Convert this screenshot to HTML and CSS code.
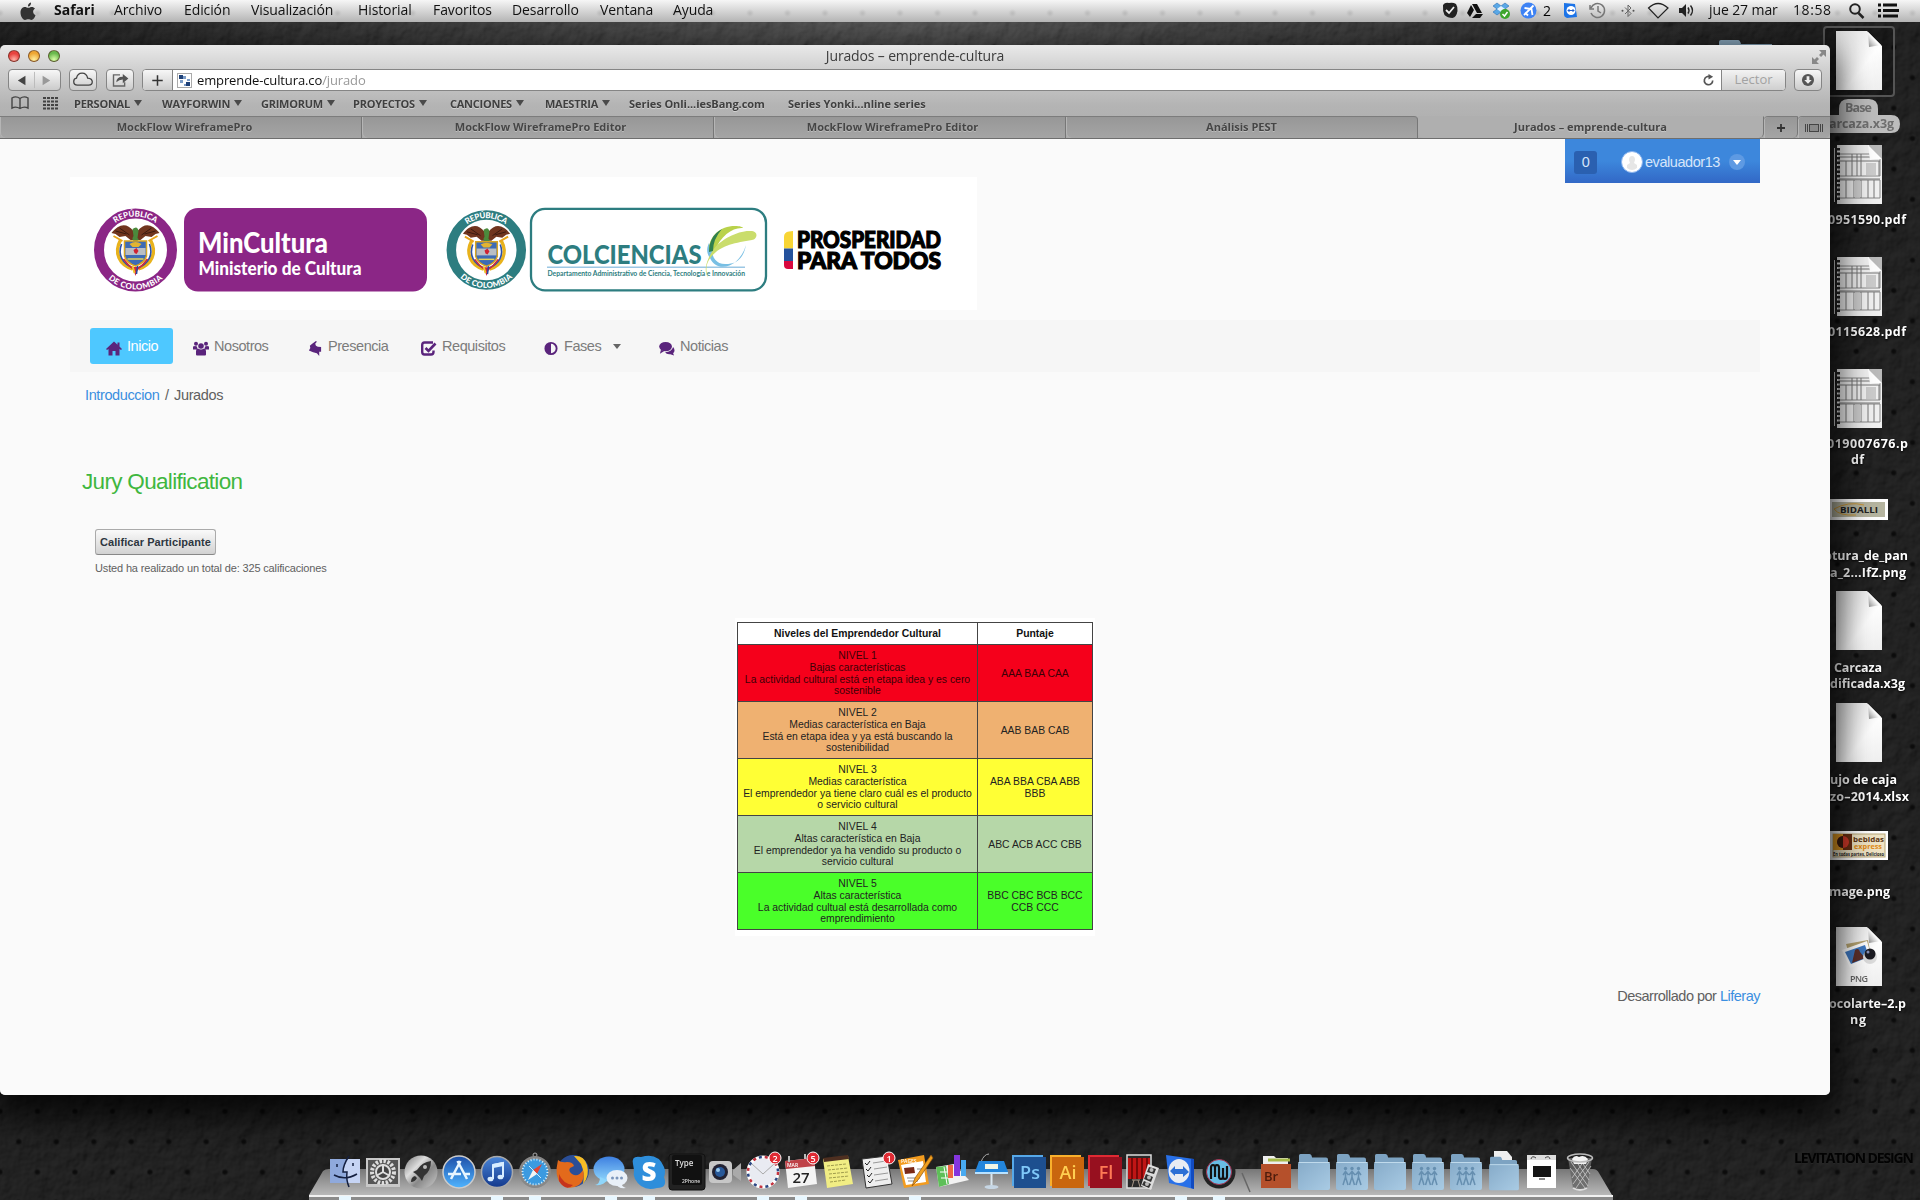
FILE: index.html
```html
<!DOCTYPE html>
<html lang="es">
<head>
<meta charset="utf-8">
<title>Jurados – emprende-cultura</title>
<link rel="stylesheet" href="styles.css">
</head>
<body>
<svg class="defs" width="0" height="0" aria-hidden="true">
  <defs>
    <linearGradient id="paper" x1="0" y1="0" x2="1" y2="1"><stop offset="0" stop-color="#dcdcdc"/><stop offset=".6" stop-color="#fff"/><stop offset="1" stop-color="#eee"/></linearGradient>
    <linearGradient id="fold" x1="0" y1="1" x2="1" y2="0"><stop offset="0" stop-color="#888"/><stop offset=".5" stop-color="#fff"/><stop offset="1" stop-color="#ccc"/></linearGradient>
    <linearGradient id="blue" x1="0" y1="0" x2="0" y2="1"><stop offset="0" stop-color="#1d4fa8"/><stop offset="1" stop-color="#4fb4ff"/></linearGradient>
    <linearGradient id="navy" x1="0" y1="0" x2="0" y2="1"><stop offset="0" stop-color="#4a86d8"/><stop offset="1" stop-color="#12388c"/></linearGradient>
    <linearGradient id="metal" x1="0" y1="0" x2="1" y2="1"><stop offset="0" stop-color="#777"/><stop offset=".35" stop-color="#ddd"/><stop offset=".6" stop-color="#888"/><stop offset="1" stop-color="#ccc"/></linearGradient>
    <linearGradient id="folderFill" x1="0" y1="0" x2="1" y2="1"><stop offset="0" stop-color="#86abc9"/><stop offset="1" stop-color="#a9cbe4"/></linearGradient>
    <linearGradient id="chat" x1="0" y1="0" x2="0" y2="1"><stop offset="0" stop-color="#3d7fe0"/><stop offset="1" stop-color="#8fd6fb"/></linearGradient>
    <filter id="leather" x="0" y="0" width="100%" height="100%">
      <feTurbulence type="fractalNoise" baseFrequency=".07 .06" numOctaves="3" seed="4"/>
      <feDiffuseLighting surfaceScale="2" lighting-color="#fff"><feDistantLight azimuth="235" elevation="32"/></feDiffuseLighting>
    </filter>
    <symbol id="doc" viewBox="0 0 46 59">
      <path d="M0 0H31L46 15V59H0Z" fill="url(#paper)"/>
      <path d="M32 1L45 14L33 16Z" fill="url(#fold)"/>
    </symbol>
    <symbol id="pdf" viewBox="0 0 48 59">
      <path d="M3 0H48V59H3Z" fill="#f1f1f1"/>
      <path d="M5 9H46V31H5ZM5 35H46V53H5Z" fill="none" stroke="#888"/>
      <path d="M5 12H46M5 16H46M5 34H46M12 16V31M18 9V31M23 9V31M27 9V31M45 16V31M12 35V53M20 35V53M27 35V53M34 35V53M40 35V53" stroke="#777"/>
      <path d="M32 18h10v12h-10zM20 36h7v16h-7z" fill="#ccc"/>
      <path d="M4 3V57" stroke="#222" stroke-width="4" stroke-dasharray="2.5 2"/>
      <path d="M.5 3V57" stroke="#ddd"/>
      <path d="M35 0H48V14L36 15Z" fill="#bbb"/><path d="M34 0L48 14L36 15Z" fill="#fff"/>
    </symbol>
    <symbol id="folder" viewBox="0 0 38 44">
      <path d="M4 17V5.500q0-1.500 1.500-1.500h9q1.500 0 2 1.500l.6 2H31q2 0 2 2V17Z" fill="#7da3c2"/>
      <path d="M3 14q0-2 2-2h28q2 0 2 2v24q0 2-2 2H5q-2 0-2-2Z" fill="url(#folderFill)"/>
      <path d="M3.500 12.500h31" stroke="#c0daec"/>
    </symbol>
    <symbol id="people" viewBox="0 0 20 20">
      <g fill="none" stroke="#668fb0" stroke-width="1.500"><path d="M3.500 5V11L1 19M3.500 11L6 19M1 9L3.500 5.500L6.500 9M10 5V11L7.500 19M10 11L12.500 19M7 9L10 5.500L13 9M16.500 5V11L14 19M16.500 11L19 19M13.500 9L16.500 5.500L19 9"/></g>
      <g fill="#668fb0"><circle cx="3.500" cy="2.500" r="1.700"/><circle cx="10" cy="2.500" r="1.700"/><circle cx="16.500" cy="2.500" r="1.700"/></g>
    </symbol>
    <symbol id="crest" viewBox="-28 -28 56 56">
      <g fill="none" stroke-width="3.400"><path d="M-15-9C-22 4-16 16-3 20" stroke="#e8b21c"/><path d="M15-9C22 4 16 16 3 20" stroke="#e8b21c"/></g>
      <g fill="none" stroke-width="1.600"><path d="M-14-5C-18 6-13 15-2 19M14-5C18 6 13 15 2 19" stroke="#2d51a8"/><path d="M-12 10Q-8 16-1 21M12 10Q8 16 1 21" stroke="#d2273a"/></g>
      <path d="M-2-18C-9-27-17-25-24-16L-20-15L-16-12L-10-13L-5-9H5L10-13L16-12L20-15L24-16C17-25 9-27 2-18Z" fill="#70351f"/>
      <path d="M-20-18L-9-15M-16-21L-6-14M20-18L9-15M16-21L6-14" stroke="#3b1a10"/>
      <path d="M-3-20Q2-24 3-18L2-11Q5-9 0-7Q-5-9-2-13Z" fill="#4b8a3c"/>
      <path d="M-22-13L-13-8M22-13L13-8" stroke="#e8a51c" stroke-width="2"/>
      <path d="M-11-8H11V7Q9 14 0 17Q-9 14-11 7Z" fill="#3e6bb5" stroke="#d9a520" stroke-width="1.500"/>
      <path d="M-10-1H10V6H-10Z" fill="#b9bec4"/><path d="M-6-5Q0-9 6-5L3-2H-3Z" fill="#e2b431"/>
      <path d="M-2 1L1-1L3 2L1 5L-1 4Z" fill="#cf2233"/><path d="M-8 10H8" stroke="#e3d25c" stroke-width="1.500"/>
      <path d="M-3 18L0 27L3 18Z" fill="#d2273a"/><path d="M-3 17L-1 24" stroke="#f0c52c" stroke-width="2"/><path d="M2 17L1 25" stroke="#2749a0" stroke-width="1.500"/>
    </symbol>
  </defs>
</svg>

<header class="menubar">
  <svg class="apple" viewBox="0 0 16 19"><path d="M11 .5C9 1 7.800 2.500 8 4.500C10 4.500 11.200 2.500 11 .5ZM8.300 5.800C7 5.800 6.300 5 4.800 5C2.500 5 .5 7.200.5 10.500C.5 14 2.800 18 5 18C6.300 18 6.900 17.300 8.300 17.300C9.700 17.300 10.200 18 11.400 18C13.200 18 14.800 15.400 15.500 13.200C12.500 11.800 12.500 8 15 6.600C14.200 5.500 13 5 11.800 5C10.300 5 9.600 5.800 8.300 5.800Z" fill="#333"/></svg>
  <nav class="menus"><b>Safari</b><span>Archivo</span><span>Edición</span><span>Visualización</span><span>Historial</span><span>Favoritos</span><span>Desarrollo</span><span>Ventana</span><span>Ayuda</span></nav>
  <svg class="status" viewBox="1440 0 262 22">
    <path d="M1443 5q2-3 6-2q4-1 7 1q2 3 1.500 7q-1 6-5 7q-5 0-8-3q-2-4-1.500-10Z" fill="#222"/><path d="M1446 10l3 3l5-6" fill="none" stroke="#eee" stroke-width="1.800"/>
    <path d="M1472 4h5l5 9h-5zM1471 5l3 5l-4 7l-3-4zM1476 14h7l-3 4h-8z" fill="#111"/>
    <path d="M1493 6l4-3l4 3l4-3l4 3l-4 3l4 3l-4 3l-4-3l-4 3l-4-3l4-3Z" fill="#5aa8e6" stroke="#2b6fb5" stroke-width=".6"/><path d="M1497 9l4-3l4 3l-4 3z" fill="#e6f3fc"/><circle cx="1505" cy="14" r="5" fill="#3da52b"/><path d="M1502.500 14l2 2l3-4" fill="none" stroke="#fff" stroke-width="1.500"/>
    <circle cx="1528.500" cy="10.500" r="8" fill="#3d82f4"/><path d="M1533.500 5.500L1524 15M1524.500 8l7 1 1 6M1525 12.500l3 3" fill="none" stroke="#fff" stroke-width="1.800"/>
    <path d="M1564 3l11 1l2 13l-10 1q-3-1-3-3z" fill="#1c74e8"/><circle cx="1571" cy="10.500" r="4.500" fill="#fff"/><path d="M1568 10.500h6M1569.500 9l-1.500 1.500l1.500 1.500M1572.500 9l1.500 1.500l-1.500 1.500" fill="none" stroke="#1c5fd0"/>
    <g fill="none" stroke="#777" stroke-width="1.500"><path d="M1591 8a7 7 0 1 1 0 5M1590 5v4h4M1598 6v5l3 2"/></g>
    <path d="M1625 7.500l6 6-3 3V5l3 3-6 6" fill="none" stroke="#666" stroke-width="1"/><g fill="#555"><circle cx="1622.500" cy="10.700" r="1"/><circle cx="1633.500" cy="10.700" r="1"/></g>
    <path d="M1648.500 8Q1658-1 1668 8L1658 18Z" fill="none" stroke="#222" stroke-width="1.200"/>
    <path d="M1679 8h3l4-4v13l-4-4h-3z" fill="#222"/><path d="M1688 7.500q2 3 0 6M1690.500 5.500q4 5 0 10" fill="none" stroke="#222" stroke-width="1.400"/>
    <text x="1543" y="16" class="statusnum">2</text>
  </svg>
  <span class="date">jue 27 mar</span><span class="clock">18:58</span>
  <svg class="tools" viewBox="0 0 60 22"><circle cx="11" cy="9" r="4.800" fill="none" stroke="#222" stroke-width="2"/><path d="M14.500 13l5 5" stroke="#222" stroke-width="2.500"/><path d="M34 5h3M34 10.500h3M34 16h3M39 5h14M39 10.500h16M39 16h15" stroke="#111" stroke-width="2.800"/></svg>
</header>

<main class="desktop">
  <svg class="leather" width="1920" height="1178"><rect width="1920" height="1178" filter="url(#leather)"/></svg>
  <div class="holes"></div>

  <svg class="files" width="320" height="1060" viewBox="1600 22 320 1060">
    <path d="M1719 60V42q0-2 2-2h17q2 0 3 4h31V60z" fill="#8faec4"/>
    <rect x="1824" y="27" width="70" height="69" rx="3" fill="rgba(0,0,0,.25)" stroke="#555" stroke-width="2"/>
    <use href="#doc" x="1836" y="31" width="46" height="59"/>
    <path d="M1839 115v-6q0-10 9-10h21q9 0 9 10v6h13q9 0 9 9t-9 9H1790v-18z" fill="#bdbdbd"/>
    <g class="chosen"><text x="1845" y="112" textLength="27">Base</text><text x="1829" y="128" textLength="65">arcaza.x3g</text></g>
    <use href="#pdf" x="1834" y="145" width="48" height="59"/>
    <use href="#pdf" x="1834" y="257" width="48" height="59"/>
    <use href="#pdf" x="1834" y="369" width="48" height="59"/>
    <g class="labels">
      <text x="1828" y="224" textLength="78">0951590.pdf</text>
      <text x="1828" y="336" textLength="78">0115628.pdf</text>
      <text x="1827" y="448" textLength="81">019007676.p</text><text x="1851" y="464" textLength="13">df</text>
      <text x="1824" y="560" textLength="84">ptura_de_pan</text><text x="1830" y="577" textLength="76">a_2...IfZ.png</text>
      <text x="1834" y="672" textLength="48">Carcaza</text><text x="1830" y="688" textLength="75">dificada.x3g</text>
      <text x="1830" y="784" textLength="67">ujo de caja</text><text x="1830" y="801" textLength="79">zo–2014.xlsx</text>
      <text x="1829" y="896" textLength="61">mage.png</text>
      <text x="1829" y="1008" textLength="77">ocolarte–2.p</text><text x="1850" y="1024" textLength="16">ng</text>
    </g>
    <rect x="1820" y="499" width="68" height="21" fill="#fff"/><rect x="1832" y="502" width="53" height="15" fill="#b6b5a0"/>
    <path d="M1834 509q14-8 30-4M1834 509q5 7 22 6" fill="none" stroke="#c9973a"/><text x="1840" y="513" textLength="38" lengthAdjust="spacingAndGlyphs" class="bidalli">BIDALLI</text>
    <use href="#doc" x="1836" y="591" width="46" height="59"/>
    <use href="#doc" x="1836" y="703" width="46" height="59"/>
    <rect x="1820" y="831" width="68" height="29" fill="#fff"/><rect x="1833" y="834" width="52" height="23" fill="#efe4c5" stroke="#b9a779"/>
    <rect x="1833" y="834" width="19" height="16" fill="#6b2f13"/><rect x="1833" y="834" width="10" height="16" fill="#e39a23"/><circle cx="1843" cy="842" r="6" fill="#d43a2a"/><path d="M1843 836a6 6 0 0 0 0 12z" fill="#3a1d10"/>
    <text x="1853" y="841.500" textLength="31" lengthAdjust="spacingAndGlyphs" class="bebidas">bebidas</text><text x="1854" y="848.500" textLength="28" lengthAdjust="spacingAndGlyphs" class="express">express</text><text x="1833" y="856" textLength="51" lengthAdjust="spacingAndGlyphs" class="slogan">En todas partes, Delicioso</text>
    <use href="#doc" x="1836" y="927" width="46" height="59"/>
    <path d="M1846 944l22-4 3 16-20 5z" fill="#b6a472"/><path d="M1842 950l25-9 5 18-22 9z" fill="#fff"/><path d="M1845 952l20-7 4 12-18 7z" fill="#3e78c0"/><path d="M1852 963l3-13q4-3 5 2l5 6z" fill="#5c2f2a"/>
    <circle cx="1870" cy="957" r="7" fill="#ddd"/><circle cx="1870" cy="954" r="5.500" fill="#1b1b22"/><circle cx="1868" cy="952" r="1.500" fill="#8892b8"/>
    <text x="1850" y="982" textLength="18" class="ext">PNG</text>
  </svg>
  <div class="credit">LEVITATION DESIGN</div>

  <section class="window">
    <div class="titlebar">
      <div class="lights"><i class="red"></i><i class="amber"></i><i class="green"></i></div>
      <h1>Jurados – emprende-cultura</h1>
      <svg class="expand" viewBox="0 0 14 14"><path d="M7 0h7v7l-2.500-2.500l-2.500 2.500l-2-2l2.500-2.500zM0 7l2.500 2.500l2.500-2.500l2 2l-2.500 2.500l2.500 2.500H0z" fill="#888"/></svg>
    </div>
    <div class="toolbar">
      <div class="btn pair"><svg viewBox="0 0 53 21"><path d="M17 6v10L9 11z" fill="#444"/><path d="M35 6v10l8-5z" fill="#999"/><path d="M26.500 2v17" stroke="#bbb"/></svg></div>
      <div class="btn"><svg viewBox="0 0 28 21"><path d="M8 16q-4 0-4-4q0-3 3-3.500Q8 3 13 3t6 5.500q5 .5 5 4T20 16z" fill="none" stroke="#444" stroke-width="1.400"/></svg></div>
      <div class="btn share"><svg viewBox="0 0 28 21"><path d="M14 5H7v12h12v-4" fill="none" stroke="#666" stroke-width="1.500"/><path d="M10 13q0-6 7-6V4l6 5-6 5v-4q-4 0-7 3z" fill="#555"/></svg></div>
      <div class="address">
        <div class="add"><svg viewBox="0 0 28 21"><path d="M14 5.500v11M8.500 11h11" stroke="#333" stroke-width="1.600"/></svg></div>
        <svg class="favicon" viewBox="0 0 15 15"><rect x=".5" y=".5" width="14" height="14" fill="#fff" stroke="#aaa"/><path d="M2 2h4v4H2zM9 9h4v4H9z" fill="#1f4178"/><path d="M6 3h3v3H6zM3 7h3v3H3zM7 11h2v2H7zM10 6h3v2h-3z" fill="#7b9cc7"/></svg>
        <span class="url">emprende-cultura.co<i>/jurado</i></span>
        <svg class="reload" viewBox="0 0 14 14"><path d="M11.500 7a4.500 4.500 0 1 1-3-4.200" fill="none" stroke="#555" stroke-width="1.800"/><path d="M7 0l5 3-5 3z" fill="#555"/></svg>
        <span class="reader">Lector</span>
      </div>
      <div class="btn"><svg viewBox="0 0 28 21"><circle cx="14" cy="10.500" r="6.500" fill="#555"/><path d="M12.500 6.500h3v4h2.500l-4 4-4-4h2.500z" fill="#eee"/></svg></div>
    </div>
    <nav class="bookmarks">
      <svg viewBox="0 0 18 14"><path d="M9 2.500Q5-.5 1 2V12Q5 10 9 12.500Q13 10 17 12V2Q13-.5 9 2.500V12" fill="none" stroke="#444" stroke-width="1.400"/></svg>
      <svg viewBox="0 0 18 14"><path d="M1 2H16M1 5.500H16M1 9H16M1 12.500H16" stroke="#444" stroke-width="2.200" stroke-dasharray="3 1"/></svg>
      <span class="drop">PERSONAL</span><span class="drop">WAYFORWIN</span><span class="drop">GRIMORUM</span><span class="drop">PROYECTOS</span><span class="drop">CANCIONES</span><span class="drop">MAESTRIA</span><span>Series Onli...iesBang.com</span><span>Series Yonki...nline series</span>
    </nav>
    <div class="tabs">
      <div>MockFlow WireframePro</div><div>MockFlow WireframePro Editor</div><div>MockFlow WireframePro Editor</div><div class="last">Análisis PEST</div><div class="active">Jurados – emprende-cultura</div>
      <div class="mini"><svg viewBox="0 0 10 10"><path d="M5 1v8M1 5h8" stroke="#333" stroke-width="1.800"/></svg></div>
      <div class="mini end"><svg viewBox="0 0 18 10"><path d="M.5 1v8M2.500 1v8M15.500 1v8M17.500 1v8" stroke="#444"/><rect x="4.500" y="1.500" width="9" height="7" fill="#8a8a8a" stroke="#444"/></svg></div>
    </div>

    <div class="page">
      <div class="userbar">
        <span class="count">0</span>
        <svg class="avatar" viewBox="0 0 22 22"><circle cx="11" cy="11" r="10.500" fill="#fff" stroke="#8ab4ee"/><path d="M11 5q3 0 3 4l-1 3 3 2v3q-5 4-10 0v-3l3-2-1-3q0-4 3-4z" fill="#e6e6e6"/></svg>
        <span class="who">evaluador13</span>
        <svg class="more" viewBox="0 0 16 16"><circle cx="8" cy="8" r="8" fill="#5e9ae3"/><path d="M4 6h8l-4 5z" fill="#fff"/></svg>
      </div>
      <svg class="banner" viewBox="70 177 907 133">
        <defs>
          <path id="arcTop" d="M102 250A33.500 33.500 0 0 1 169 250"/><path id="arcBottom" d="M96 250A39.500 39.500 0 0 0 175 250"/>
          <path id="arcTop2" d="M454.300 250A32 32 0 0 1 518.300 250"/><path id="arcBottom2" d="M448.300 250A38 38 0 0 0 524.300 250"/>
        </defs>
        <rect x="70" y="177" width="907" height="133" fill="#fff"/>
        <circle cx="135.500" cy="250" r="36.500" fill="#fff" stroke="#8b2686" stroke-width="10"/>
        <g class="arc"><text textLength="43"><textPath href="#arcTop" startOffset="50%" text-anchor="middle">REPÚBLICA</textPath></text><text textLength="60"><textPath href="#arcBottom" startOffset="50%" text-anchor="middle">DE COLOMBIA</textPath></text></g>
        <use href="#crest" x="107.500" y="221" width="56" height="56"/>
        <rect x="184" y="208" width="243" height="83.500" rx="14" fill="#8b2686"/>
        <text x="198" y="252.700" textLength="130" lengthAdjust="spacingAndGlyphs" class="brand big">MinCultura</text>
        <text x="198.500" y="274.500" textLength="163" lengthAdjust="spacingAndGlyphs" class="brand small">Ministerio de Cultura</text>
        <circle cx="486.300" cy="250" r="35" fill="#fff" stroke="#2d7d80" stroke-width="9.500"/>
        <g class="arc"><text textLength="41"><textPath href="#arcTop2" startOffset="50%" text-anchor="middle">REPÚBLICA</textPath></text><text textLength="58"><textPath href="#arcBottom2" startOffset="50%" text-anchor="middle">DE COLOMBIA</textPath></text></g>
        <use href="#crest" x="459" y="222" width="55" height="55"/>
        <rect x="531" y="208.800" width="235" height="81.500" rx="14" fill="#fff" stroke="#2d7d80" stroke-width="2.300"/>
        <text x="547.500" y="264" textLength="154" lengthAdjust="spacingAndGlyphs" class="colc">COLCIENCIAS</text>
        <path d="M547 267.300H745" stroke="#9cc7e4" stroke-width="1.500"/>
        <text x="547.500" y="276" textLength="197.500" lengthAdjust="spacingAndGlyphs" class="dept">Departamento Administrativo de Ciencia, Tecnología e Innovación</text>
        <path d="M710 258C716 273 739 269 746 245C743 261 734 264 727 264C717 265 712 258 712 250L709 243C706 249 707 254 710 258Z" fill="#78bfe4"/>
        <path d="M709 250C709 236 720 226 735 226C740 226 743 227 743 228C733 227 721 235 714 252Z" fill="#b9d24b"/>
        <path d="M713 250C720 240 737 231 749 231C759 230 758 239 752 240C736 243 722 244 711 257C705 265 706 270 708 278C703 269 707 260 713 250Z" fill="#cadd6c"/>
        <path d="M709 252Q709 236 722 229Q713 239 713 251Z" fill="#2f7f4f"/>
        <path d="M793 231v17.500h-9V237q0-5 5-5.500z" fill="#f8d535"/><path d="M784 248.500h9v12.500h-9z" fill="#25529c"/><path d="M784 261h9v8h-5q-4 0-4-4z" fill="#d9083e"/>
        <g class="prosper"><text x="797" y="248" textLength="144" lengthAdjust="spacingAndGlyphs">PROSPERIDAD</text><text x="797" y="268.500" textLength="144" lengthAdjust="spacingAndGlyphs">PARA TODOS</text></g>
      </svg>
      <nav class="sitenav">
        <a class="on"><svg viewBox="0 0 16 14"><path d="M8 0L0 7.500l1 1L2.500 7.500V14H6.500V9.500H9.500V14H13.500V7.500L15 8.500l1-1L13.500 5V1H11.500V3.200Z"/></svg>Inicio</a>
        <a><svg viewBox="0 0 16 14"><circle cx="3" cy="2.200" r="2"/><circle cx="13" cy="2.200" r="2"/><circle cx="8" cy="4.500" r="2.800"/><path d="M0 5q2-1 4 0l.5 3H0zM12 5q2-1 4 0v3h-4.500zM3 13V9.500Q3 7.500 5 7q3 2 6 0q2 .5 2 2.500V13q0 1-1 1H4q-1 0-1-1z"/></svg>Nosotros</a>
        <a><svg viewBox="0 0 14 16"><path d="M8 0L9 .7L7.200 3L8 5L10 6L13.500 6.500L13.500 11.500L11.500 11.500V16L9 13L5 12L.5 10L2 7.500L1.500 5L4 3Z"/></svg>Presencia</a>
        <a><svg viewBox="0 0 16 14"><path d="M12 1H3.500Q1.200 1 1.200 3.500V10.500Q1.200 13 3.500 13H10Q12.500 13 12.500 10.500V9" fill="none" stroke="#5a247c" stroke-width="2.400"/><path d="M4.500 6.500L7.500 9.500L14.500 2" fill="none" stroke="#5a247c" stroke-width="2.600"/></svg>Requisitos</a>
        <a><svg viewBox="0 0 16 16"><path fill-rule="evenodd" d="M8 1a7 7 0 1 1 0 14A7 7 0 0 1 8 1ZM8 3a5 5 0 0 1 0 10Z"/></svg>Fases<i></i></a>
        <a><svg viewBox="0 0 17 15"><ellipse cx="7" cy="5.500" rx="6.800" ry="5"/><path d="M2 9l-1 4 5-3zM15 6q3 4 0 6.500l1 2.500-4-1.500q-4 .5-5.500-2q7-.5 8.500-5.500z"/></svg>Noticias</a>
      </nav>
      <div class="crumbs"><a>Introduccion</a><span>/</span><span>Jurados</span></div>
      <section class="jury">
        <h2>Jury Qualification</h2>
        <button>Calificar Participante</button>
        <p>Usted ha realizado un total de: 325 calificaciones</p>
      </section>
      <div class="levels">
        <table>
          <tr class="head"><th>Niveles del Emprendedor Cultural</th><th>Puntaje</th></tr>
          <tr class="n1"><td>NIVEL 1<br>Bajas características<br>La actividad cultural está en etapa idea y es cero<br>sostenible</td><td>AAA BAA CAA</td></tr>
          <tr class="n2"><td>NIVEL 2<br>Medias característica en Baja<br>Está en etapa idea y ya está buscando la<br>sostenibilidad</td><td>AAB BAB CAB</td></tr>
          <tr class="n3"><td>NIVEL 3<br>Medias característica<br>El emprendedor ya tiene claro cuál es el producto<br>o servicio cultural</td><td>ABA BBA CBA ABB<br>BBB</td></tr>
          <tr class="n4"><td>NIVEL 4<br>Altas característica en Baja<br>El emprendedor ya ha vendido su producto o<br>servicio cultural</td><td>ABC ACB ACC CBB</td></tr>
          <tr class="n5"><td>NIVEL 5<br>Altas característica<br>La actividad cultual está desarrollada como<br>emprendimiento</td><td>BBC CBC BCB BCC<br>CCB CCC</td></tr>
        </table>
      </div>
      <footer>Desarrollado por <a>Liferay</a></footer>
    </div>
  </section>

  <svg class="shelf" viewBox="0 0 1304 32" width="1304" height="32">
    <defs><linearGradient id="shelfFill" x1="0" y1="0" x2="0" y2="1"><stop offset="0" stop-color="#777"/><stop offset="1" stop-color="#b9b9b9"/></linearGradient></defs>
    <path d="M14 3Q16 1 20 1H1284Q1288 1 1290 5L1303 27H0Z" fill="url(#shelfFill)"/>
    <rect y="27" width="1304" height="2" fill="#f2f2f2"/><rect y="29" width="1304" height="3" fill="#8b8b8b"/>
    <path d="M933 5L941 24" stroke="#666" stroke-width="1.500"/>
    <g fill="#e8f7ff"><path d="M30 28h12v4H30zM182 28h12v4h-12zM220 28h12v4h-12zM296 28h12v4h-12zM334 28h12v4h-12zM448 28h12v4h-12zM486 28h12v4h-12zM600 28h12v4h-12zM866 28h12v4h-12zM904 28h12v4h-12z"/></g>
  </svg>
  <div class="dock">
    <svg viewBox="0 0 38 44"><path d="M4 9H34V33H4Z" fill="#8fa9dc"/><path d="M22 9Q17 16 17 22H21Q20 28 22 33H34V9Z" fill="#c6d4f4"/><path d="M23 6Q17 15 17 22H21Q20 30 23 37M11 14V17M27 13V16M8 25Q19 31 31 24" fill="none" stroke="#152040" stroke-width="1.500"/></svg>
    <svg viewBox="0 0 38 44"><rect x="2" y="8" width="34" height="29" fill="#c8c8c8"/><rect x="4" y="10" width="30" height="24" fill="#555"/><circle cx="19" cy="22" r="11" fill="none" stroke="#ddd" stroke-width="4" stroke-dasharray="2.500 1.500"/><circle cx="19" cy="22" r="7" fill="#444" stroke="#ddd" stroke-width="2"/><path d="M19 22V14M19 22L26 26M19 22L12 26" stroke="#ddd" stroke-width="2"/></svg>
    <svg viewBox="0 0 38 44"><circle cx="19" cy="22" r="16.500" fill="url(#metal)"/><path d="M29 11Q20 12 15 20L11 22L14 24L18 28L20 31L22 26Q29 21 29 11ZM13 26Q9 27 9 32Q13 32 15 28Z" fill="#333"/><circle cx="23" cy="17" r="2" fill="#bbb"/></svg>
    <svg viewBox="0 0 38 44"><circle cx="19" cy="22" r="16" fill="url(#blue)" stroke="#ccc" stroke-width="1.500"/><path d="M20.500 11L11 29M17.500 11L27 29M8 24H21M25 24H30" stroke="#e8f6ff" stroke-width="2.500"/></svg>
    <svg viewBox="0 0 38 44"><circle cx="19" cy="22" r="15.500" fill="url(#navy)" stroke="#aaa" stroke-width="1.500"/><path d="M15 29V15L25 13V27" fill="none" stroke="#d8edff" stroke-width="2"/><path d="M15 16L25 14" stroke="#d8edff" stroke-width="4"/><ellipse cx="12.500" cy="29" rx="3" ry="2.300" fill="#d8edff"/><ellipse cx="22.500" cy="27" rx="3" ry="2.300" fill="#d8edff"/></svg>
    <svg viewBox="0 0 38 44"><circle cx="19" cy="5" r="2" fill="none" stroke="#aaa"/><circle cx="19" cy="22" r="14.500" fill="#3b9ae0" stroke="#888" stroke-width="3"/><circle cx="19" cy="22" r="12.500" fill="none" stroke="#d9f2ff" stroke-width="2" stroke-dasharray="1 2"/><path d="M26 14L17 20L21 24Z" fill="#e24434"/><path d="M12 30L17 20L21 24Z" fill="#f3f3f3"/><path d="M13 16L25 28" stroke="#cceeff"/></svg>
    <svg viewBox="0 0 38 44"><circle cx="19" cy="21" r="16" fill="#2a4e97"/><path d="M20 6Q30 5 33 15Q36 26 29 34Q31 23 27 14Z" fill="#f6bd25"/><path d="M4 10Q7 13 13 12Q19 12 20 16L16 18Q14 21 18 24Q24 28 29 20Q32 29 25 35Q15 41 7 34Q0 26 4 10Z" fill="#e36a1b"/><path d="M5 24Q9 34 19 35Q12 42 5 31Z" fill="#c6331c"/></svg>
    <svg viewBox="0 0 38 44"><ellipse cx="17" cy="19" rx="15.500" ry="12.500" fill="url(#chat)"/><path d="M8 27Q8 34 3 35Q12 36 15 30Z" fill="#8fd6fb"/><ellipse cx="25" cy="28" rx="10.500" ry="8" fill="#e9f0f8"/><path d="M29 33Q30 37 34 38Q26 39 24 34Z" fill="#e9f0f8"/><g fill="#7b96bc"><circle cx="20.500" cy="28" r="1.500"/><circle cx="25" cy="28" r="1.500"/><circle cx="29.500" cy="28" r="1.500"/></g></svg>
    <svg viewBox="0 0 38 44"><path d="M3 14Q1 5 11 7Q28 2 34 17Q36 22 34 27Q38 38 27 38Q12 42 5 29Q3 25 4 20Z" fill="#2e8edb"/><text x="19" y="31" class="skype">S</text></svg>
    <svg viewBox="0 0 38 44"><rect x="1" y="4" width="36" height="36" rx="3" fill="#222" stroke="#111"/><rect x="4" y="5" width="30" height="30" rx="2" fill="#111"/><text x="7" y="16" class="type">Type</text><text x="14" y="33" class="phone">2Phone</text></svg>
    <svg viewBox="0 0 38 44"><path d="M27 20L35 13V31L27 25Z" fill="#aaa"/><rect x="3" y="11" width="23" height="22" rx="4" fill="#c7c7c7"/><circle cx="14" cy="22" r="8" fill="#223"/><circle cx="14" cy="22" r="5" fill="#275899"/><circle cx="12" cy="20" r="2" fill="#98c9ee"/></svg>
    <svg viewBox="0 0 38 44"><circle cx="19" cy="22" r="15" fill="#e9ebf2" stroke="#fff" stroke-width="3"/><circle cx="19" cy="22" r="15" fill="none" stroke="#c43340" stroke-width="2.500" stroke-dasharray="3 9"/><circle cx="19" cy="22" r="15" fill="none" stroke="#2b4784" stroke-width="2.500" stroke-dasharray="3 9" stroke-dashoffset="6"/><path d="M8 14L19 24L30 14" fill="none" stroke="#aaa"/><circle cx="31" cy="8" r="6" fill="#e02b34" stroke="#fff"/><text x="31" y="11.500" class="num">2</text></svg>
    <svg viewBox="0 0 38 44"><path d="M3 11L32 8L35 34L6 38Z" fill="#f4f4f4"/><path d="M3 11L32 8L33 16L4 19Z" fill="#bf4248"/><text x="5" y="17" class="mar">MAR</text><text x="19" y="33" class="day">27</text><path d="M7 12V6M23 9V4" stroke="#bbb" stroke-width="2"/><circle cx="31" cy="8" r="6" fill="#e02b34" stroke="#fff"/><text x="31" y="11.500" class="num">5</text></svg>
    <svg viewBox="0 0 38 44"><path d="M3 9L28 6L33 34L7 38Z" fill="#f1ed84"/><path d="M3 8L28 5L29 9L4 12Z" fill="#4e2f20"/><path d="M7 16L26 14M8 20L28 18M9 24L28 22M9 28L29 26M10 32L26 30" stroke="#a09c4d" stroke-dasharray="3 1"/></svg>
    <svg viewBox="0 0 38 44"><path d="M4 9L29 6L34 34L8 38Z" fill="#eee" stroke="#333"/><path d="M7 13l2 2 3-4M8 19l2 2 3-4M9 25l2 2 3-4M10 31l2 2 3-4" fill="none" stroke="#222"/><path d="M15 13L28 11M16 19L29 17M16 25L30 23M17 31L30 29" stroke="#999"/><circle cx="31" cy="8" r="6" fill="#e02b34" stroke="#fff"/><text x="31" y="11.500" class="num">1</text></svg>
    <svg viewBox="0 0 38 44"><path d="M2 10L28 5L33 34L8 38Z" fill="#f39c1f"/><path d="M5 15L27 11L30 32L10 35Z" fill="#fff"/><text x="5" y="13" class="pages">PAGES</text><path d="M8 18L18 17L19 23L9 24Z" fill="#7b2b18"/><path d="M11 28h13M12 31h10M21 19h5" stroke="#888"/><path d="M35 5L19 28L16 36L22 30L37 8Z" fill="#f0a020" stroke="#8c5310" stroke-width=".7"/></svg>
    <svg viewBox="0 0 38 44"><path d="M2 17L20 14L35 30L5 37Z" fill="#f2f2f2"/><path d="M2 17L12 16L15 34L5 37Z" fill="#5ebf58"/><path d="M6 22h7M7 28h7M10 17l3 17" stroke="#fff"/><path d="M14 15h5v13h-5z" fill="#ee6644"/><path d="M20 5h6v21h-6z" fill="#8435de"/><path d="M27 10h5v16h-5z" fill="#48aaf0"/></svg>
    <svg viewBox="0 0 38 44"><path d="M9 12Q12 4 17 4" fill="none" stroke="#aaa"/><path d="M7 11H32L36 22H3Z" fill="#2386dc"/><path d="M3 22h33v2H3z" fill="#b9e2ff"/><path d="M13 14h13v5H13z" fill="#f1f6e6"/><path d="M18.500 24h2v12h-2z" fill="#d9e6ef"/><ellipse cx="19.500" cy="37" rx="7" ry="2" fill="#c6d6e4"/></svg>
    <svg viewBox="0 0 38 44"><path d="M2 5H33V36H2Z" fill="#56a8e8"/><path d="M4 7H36V38H4Z" fill="#1d4f8f"/><text x="20" y="29" class="adobe ps">Ps</text></svg>
    <svg viewBox="0 0 38 44"><path d="M2 5H33V36H2Z" fill="#f9b02c"/><path d="M4 7H36V38H4Z" fill="#c9660e"/><text x="20" y="29" class="adobe ai">Ai</text></svg>
    <svg viewBox="0 0 38 44"><path d="M2 5H33V36H2Z" fill="#e02a33"/><path d="M4 7H36V38H4Z" fill="#97101f"/><text x="20" y="29" class="adobe fl">Fl</text></svg>
    <svg viewBox="0 0 38 44"><path d="M3 5H27V38H3Z" fill="#2a2a2a" stroke="#ddd" stroke-width="1.500"/><path d="M4 8H26V29H4Z" fill="#c01515"/><path d="M8 8v21M13 8v21M18 8v21M23 8v21" stroke="#7a0808" stroke-width="2"/><path d="M8 30h8M10 30l-2 7M14 30l2 7" stroke="#a98"/><path d="M24 14L35 18L27 40L17 36Z" fill="#ddd"/><path d="M25 17L32 19L30 24L23 22ZM22 24L29 27L27 32L20 29ZM20 31L27 34L25 38L18 35Z" fill="#333"/><circle cx="27.500" cy="20" r="2" fill="#bbb"/><circle cx="25" cy="27.500" r="2" fill="#bbb"/><circle cx="23" cy="34" r="2" fill="#bbb"/></svg>
    <svg viewBox="0 0 38 44"><path d="M4 5L32 9V39L7 33Z" fill="#2870e8"/><path d="M29 9L32 9V39L29 38Z" fill="#124bc0"/><ellipse cx="17" cy="21" rx="10.500" ry="12" fill="#e9edf3"/><path d="M8 21L13 16V19H21V16L27 22L21 27V24H13V26Z" fill="#2c70d5"/></svg>
    <svg viewBox="0 0 38 44"><circle cx="19" cy="22" r="16.500" fill="#222"/><circle cx="19" cy="22" r="12.500" fill="#68bce4" stroke="#a8304e"/><path d="M11 29V18Q11 15 13 15T15 18V27V18Q15 15 17 15T19 18V27M19 18V26Q19 29 21 29T23 26V18V26Q23 29 25 29T27 26V16" fill="none" stroke="#111" stroke-width="2.200"/></svg>
    <span class="gap"></span>
    <svg viewBox="0 0 38 44"><path d="M6 6h11l2 2h12v12H6z" fill="#eee"/><path d="M11 10H33" stroke="#a6bb48" stroke-width="3"/><path d="M4 14H34V38H4Z" fill="#b5502b"/><text x="7" y="31" class="br">Br</text></svg>
    <svg viewBox="0 0 38 44"><use href="#folder"/></svg>
    <svg viewBox="0 0 38 44"><use href="#folder"/><use href="#people" x="9" y="16" width="20" height="20"/></svg>
    <svg viewBox="0 0 38 44"><use href="#folder"/></svg>
    <svg viewBox="0 0 38 44"><use href="#folder"/><use href="#people" x="9" y="16" width="20" height="20"/></svg>
    <svg viewBox="0 0 38 44"><use href="#folder"/><use href="#people" x="9" y="16" width="20" height="20"/></svg>
    <svg viewBox="0 0 38 44"><path d="M9 1H22L27 7V14H9Z" fill="#eee"/><use href="#folder" y="3" height="41"/></svg>
    <svg viewBox="0 0 38 44"><path d="M4 6H33V38H4Z" fill="#fff"/><path d="M4 5H33V10H4Z" fill="#ddd"/><path d="M8 9q1-4 5-1M22 8q4-3 5 1" fill="none" stroke="#444"/><path d="M10 16H28V27H10Z" fill="#151515"/><path d="M16 28h6v2h-6z" fill="#888"/></svg>
    <svg viewBox="0 0 38 44"><path d="M7 8L12 38Q19 42 26 38L31 8Z" fill="#666" opacity=".85"/><path d="M10 12L27 36M15 11L28 30M20 11L29 24M9 18L24 38M28 12L12 34M23 11L11 28M30 16L15 38" stroke="#ccc" stroke-width=".8"/><path d="M11 9Q14 4 18 7Q23 4 27 9L25 14H13Z" fill="#f2f2f2"/><ellipse cx="19" cy="8" rx="12.500" ry="4" fill="none" stroke="#bbb" stroke-width="1.500"/><path d="M12 38Q19 42 26 38" fill="none" stroke="#ddd" stroke-width="2"/></svg>
  </div>
</main>
</body>
</html>
```
FILE: styles.css
```css
* { box-sizing: border-box; }
body { margin: 0; width: 1920px; height: 1200px; overflow: hidden; background: #161616; font-family: "Open Sans", "Noto Sans", sans-serif; color: #111; }
.defs { position: absolute; }

/* menu bar */
.menubar { height: 22px; display: flex; align-items: center; padding-left: 20px; background: radial-gradient(circle at 50% 13px, rgba(0,0,0,.1), transparent 4px) 18.750px 0 / 37.5px 22px, linear-gradient(#f6f6f6, #d5d5d5 50%, #b4b4b4); font-size: 14px; line-height: 19px; letter-spacing: -.1px; white-space: nowrap; }
.apple { width: 16px; height: 19px; margin-right: 18px; }
.menus { display: grid; grid-template-columns: 60px 70px 67px 107px 75px 79px 88px 73px 767px; height: 22px; }
.menus b { letter-spacing: 0; }
.status { width: 262px; height: 22px; }
.statusnum { font-size: 14px; }
.date { width: 84px; margin-left: 7px; height: 22px; }
.clock { width: 51px; height: 22px; letter-spacing: .6px; }
.tools { width: 60px; height: 22px; }

/* wallpaper */
.desktop { position: relative; width: 1920px; height: 1178px; overflow: hidden; background: radial-gradient(ellipse 900px 350px at 900px 0, #484848, #181818); }
.leather { position: absolute; inset: 0; mix-blend-mode: soft-light; opacity: .4; }
.holes { position: absolute; inset: 0; opacity: .8; background-image: radial-gradient(circle, #070707 1.500px, transparent 3.5px), radial-gradient(circle, #070707 1.500px, transparent 3.5px); background-size: 37.5px 60.8px; background-position: -18.8px 25.400px, 0 -5px; }
.files { position: absolute; left: 1600px; top: 0; }
.labels text { font: bold 12.500px "Open Sans", sans-serif; fill: #fff; filter: drop-shadow(0 1px 1px #000); }
.chosen text { font: bold 12.500px "Open Sans", sans-serif; fill: #6f6f6f; }
.bidalli { font: bold 8px "Open Sans", sans-serif; fill: #222; }
.bebidas { font: bold 7.500px "Open Sans", sans-serif; fill: #5c3411; }
.express { font: bold 7px "Open Sans", sans-serif; fill: #e28a12; }
.slogan { font: bold 5px "Open Sans", sans-serif; fill: #222; }
.ext { font: 600 9px "Open Sans", sans-serif; fill: #666; }
.credit { position: absolute; left: 1794px; top: 1126px; font: 700 14px/20px "Open Sans", sans-serif; letter-spacing: -1.150px; color: #030303; white-space: nowrap; text-shadow: 0 1px #262626; }

/* browser window */
.window { position: absolute; left: 0; top: 23px; width: 1830px; height: 1050px; display: flex; flex-direction: column; border-radius: 5px; overflow: hidden; background: linear-gradient(#e9e9e9, #d0d0d0 24px, #b4b4b4 60px, #acacac 94px); box-shadow: 0 14px 36px 8px rgba(0,0,0,.8); }
.titlebar { height: 23px; display: grid; grid-template-columns: 100px 1fr 100px; align-items: center; padding: 0 4px 0 8px; }
.titlebar h1 { margin: -2px 4px 0 0; text-align: center; font: 14px/20px "Open Sans", sans-serif; color: #3c3c3c; letter-spacing: -.15px; }
.lights { display: flex; gap: 8px; margin-top: -2px; }
.lights i { width: 12px; height: 12px; border-radius: 50%; border: 1px solid rgba(70,30,20,.6); }
.red { background: radial-gradient(circle at 50% 85%, #ffb4a8, #e8443f 60%); }
.amber { background: radial-gradient(circle at 50% 85%, #fff0a0, #eda533 65%); }
.green { background: radial-gradient(circle at 50% 85%, #dcffa8, #69b84c 65%); }
.expand { width: 14px; height: 14px; justify-self: end; }
.toolbar { height: 24px; display: flex; gap: 8px; padding: 1px 8px 1px; }
.btn { width: 28px; height: 22px; border: 1px solid #858585; border-radius: 4px; background: linear-gradient(#f7f7f7, #cbcbcb); }
.btn.pair { width: 53px; }
.btn.share { margin-left: 1px; }
.btn svg, .add svg { display: block; width: 100%; height: 20px; }
.address { flex: 1; height: 22px; display: flex; align-items: center; border: 1px solid #858585; border-radius: 4px; background: #fff; overflow: hidden; }
.add { width: 30px; height: 20px; border-right: 1px solid #858585; background: linear-gradient(#f7f7f7, #cbcbcb); }
.favicon { width: 15px; height: 15px; margin: 0 5px 0 4px; }
.url { flex: 1; font-size: 13px; letter-spacing: -.12px; color: #111; }
.url i { font-style: normal; color: #999; }
.reload { width: 13px; height: 13px; margin-right: 6px; }
.reader { width: 64px; height: 20px; border-left: 1px solid #858585; background: linear-gradient(#f3f3f3, #cfcfcf); font-size: 13px; line-height: 19px; text-align: center; color: #a2a2a2; }
.bookmarks { height: 24px; display: grid; grid-template-columns: 31px 32px 88px 99px 92px 97px 95px 84px 159px 200px; align-items: center; padding: 0 0 2px 11px; font-size: 11px; font-weight: 700; letter-spacing: -.05px; color: #404040; white-space: nowrap; text-shadow: 0 1px rgba(255,255,255,.4); }
.bookmarks svg { width: 18px; height: 14px; }
.drop { letter-spacing: -.25px; }
.drop::after { content: ""; display: inline-block; margin-left: 4px; border: 4px solid transparent; border-top: 6px solid #4a4a4a; border-bottom: 0; vertical-align: 2px; }
.tabs { height: 23px; display: grid; grid-template-columns: 362px 352px 352px 352px 346px 34px 32px; border-bottom: 1px solid #6e6e6e; font-size: 11px; font-weight: 700; color: #454545; text-align: center; line-height: 20px; text-shadow: 0 1px rgba(255,255,255,.3); }
.tabs div { height: 22px; border-top: 1px solid #7c7c7c; border-right: 1px solid #777; border-radius: 0 0 0 5px; background: linear-gradient(#979797, #a5a5a5); box-shadow: inset 1px 0 #b5b5b5; padding-left: 6px; }
.tabs div:first-child { padding-left: 8px; }
.tabs .last { border-radius: 0 4px 0 5px; padding-left: 0; }
.tabs .active { background: #afafaf; border-top-color: transparent; border-radius: 0 0 5px 5px; box-shadow: none; padding-left: 0; }
.tabs .mini { border-radius: 4px 0 5px 0; display: flex; align-items: center; justify-content: center; padding: 0; }
.mini svg { width: 10px; height: 10px; }
.mini.end svg { width: 18px; }
.tabs .mini.end { border-right: 0; }

/* web page */
.page { flex: 1; display: flex; flex-direction: column; background: #fafafa; padding: 0 70px; font-family: "Liberation Sans", Arial, sans-serif; color: #606060; }
.userbar { align-self: flex-end; width: 195px; height: 44px; display: flex; align-items: center; padding: 2px 0 0 9px; background: linear-gradient(#3d87dc 50%, #3268c6); color: #d6e5fa; font-size: 14.500px; letter-spacing: -.45px; }
.count { width: 23px; height: 23px; border-radius: 3px; background: #2a60b0; text-align: center; line-height: 23px; }
.avatar { width: 22px; height: 22px; margin: 0 2px 0 24px; }
.who { width: 84px; }
.more { width: 16px; height: 16px; }
.banner { width: 907px; height: 133px; margin-top: -6px; flex: none; }
.brand { font-family: Lato, sans-serif; font-weight: 900; fill: #fff; }
.big { font-size: 29px; }
.small { font-size: 19.500px; }
.colc { font: 900 27px Lato, sans-serif; fill: #2d7d80; }
.dept { font: 700 7.500px Lato, sans-serif; fill: #2d7d80; }
.prosper text { font: 900 23.500px Lato, sans-serif; fill: #000; stroke: #000; stroke-width: 1.200px; }
.arc text { font: 900 8px Lato, sans-serif; fill: #fff; }
.sitenav { height: 52px; margin-top: 10px; flex: none; display: grid; grid-template-columns: 83px 114px 114px 122px 116px 150px; padding: 8px 0 8px 20px; background: #f6f6f6; font-size: 14.500px; letter-spacing: -.45px; color: #7c7c7c; }
.sitenav a { display: flex; align-items: center; height: 36px; padding-left: 20px; }
.sitenav a svg { width: 16px; height: 15px; margin: 5px 5px 0 0; fill: #5a247c; }
.sitenav .on { padding-left: 16px; border-radius: 3px; background: #4ec8ff; color: #fff; }
.sitenav i { margin-left: 12px; border: 4px solid transparent; border-top: 5px solid #666; border-bottom: 0; }
.crumbs { margin: 14px 0 0 15px; display: flex; gap: 5.500px; font-size: 14.500px; line-height: 18px; letter-spacing: -.38px; }
.crumbs a, footer a { color: #3b8fe0; }
.jury { display: flex; flex-direction: column; align-items: flex-start; padding-left: 25px; }
.jury h2 { margin: 64px 0 0 -13px; font-size: 22.500px; font-weight: 400; line-height: 28px; letter-spacing: -.68px; color: #3fb73f; }
.jury button { margin-top: 33px; width: 121px; height: 26px; padding: 0; border: 1px solid #aaa; border-bottom-color: #888; border-radius: 3px; background: linear-gradient(#fafafa, #d2d2d2); font: bold 11px "Liberation Sans", sans-serif; letter-spacing: .07px; color: #2d3640; white-space: nowrap; }
.jury p { margin: 6px 0 0; font-size: 11px; line-height: 14px; letter-spacing: -.15px; }
.levels { align-self: flex-start; width: 360px; height: 318px; margin: 43px 0 0 665px; padding: 4px 2px; background: #fff; }
.levels table { width: 356px; border-collapse: collapse; table-layout: fixed; font-size: 10.400px; line-height: 11.900px; color: #222; text-align: center; white-space: nowrap; }
.levels th, .levels td { padding: 1px 0 0; border: 1px solid #444; }
.levels th:first-child { width: 240px; }
.levels th { height: 22px; padding: 0; color: #111; }
.levels td { height: 57px; }
.n1 { background: #f5001b; color: #3c0006; } .n2 { background: #efb171; } .n3 { background: #ffff35; } .n4 { background: #b6d7a8; } .n5 { background: #4aff29; }
footer { margin-top: 51px; text-align: right; font-size: 14.500px; line-height: 18px; letter-spacing: -.5px; }

/* dock */
.shelf { position: absolute; left: 309px; bottom: 0; }
.dock { position: absolute; left: 326px; top: 1128px; height: 44px; display: flex; }
.dock svg { width: 38px; height: 44px; }
.gap { width: 19px; }
.dock text { font-family: "Open Sans", sans-serif; font-weight: 600; text-anchor: start; }
.dock .skype { font-size: 26px; font-weight: 800; fill: #fff; text-anchor: middle; }
.dock .type { font-size: 8px; fill: #ddd; }
.dock .phone { font-size: 5px; fill: #ddd; }
.dock .num { font-size: 9px; fill: #fff; text-anchor: middle; }
.dock .mar { font-size: 5px; fill: #fff; }
.dock .pages { font-size: 5px; fill: #fff; }
.dock .day { font-size: 15px; fill: #222; text-anchor: middle; }
.dock .adobe { font-size: 18px; text-anchor: middle; }
.dock .ps { fill: #7fc8f8; } .dock .ai { fill: #ffcf52; } .dock .fl { fill: #ff7a55; }
.dock .br { font-size: 13px; fill: #4d1c0c; }
```
